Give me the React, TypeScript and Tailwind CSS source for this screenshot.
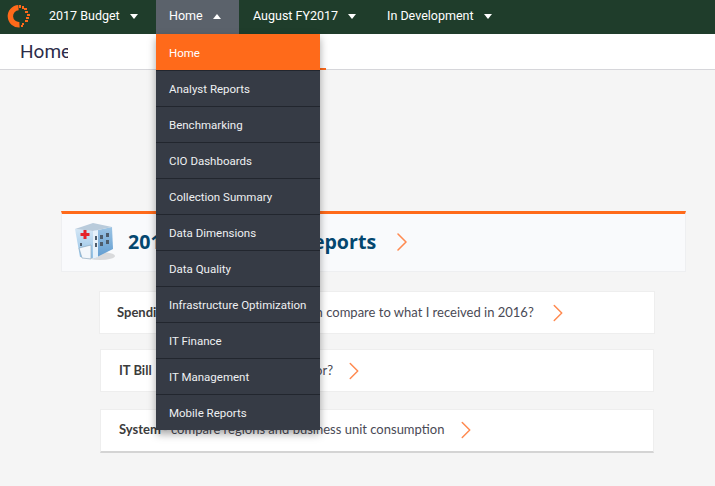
import { ChevronRight } from "lucide-react";

const menuItems = [
  "Home",
  "Analyst Reports",
  "Benchmarking",
  "CIO Dashboards",
  "Collection Summary",
  "Data Dimensions",
  "Data Quality",
  "Infrastructure Optimization",
  "IT Finance",
  "IT Management",
  "Mobile Reports",
];

function Logo() {
  return (
    <svg width="26" height="26" viewBox="0 0 26 26" className="shrink-0">
      <path d="M12.5 3.6A8.6 8.6 0 1 0 13.5 20.8" fill="none" stroke="#ff6a1a" strokeWidth="5.4" />
      <g fill="#ff6a1a">
        <rect x="13" y="1" width="2" height="3" />
        <rect x="16" y="2" width="2" height="3" />
        <rect x="18" y="4" width="3" height="2" />
        <rect x="19" y="7" width="3" height="2" />
        <rect x="21" y="10" width="3" height="2" />
        <rect x="20" y="13" width="3" height="2" />
        <rect x="19" y="16" width="3" height="2" />
        <rect x="16" y="19" width="2" height="2" />
        <rect x="15" y="21" width="2" height="2" />
      </g>
    </svg>
  );
}

function Hospital() {
  return (
    <svg width="42" height="42" viewBox="0 0 42 42" className="shrink-0">
      <defs>
        <linearGradient id="leftFace" x1="0" y1="0" x2="0" y2="1">
          <stop offset="0" stopColor="#d3e6f5" />
          <stop offset="1" stopColor="#8fc0e6" />
        </linearGradient>
        <linearGradient id="rightFace" x1="0" y1="0" x2="0" y2="1">
          <stop offset="0" stopColor="#9cc4e4" />
          <stop offset="1" stopColor="#5f9bd0" />
        </linearGradient>
      </defs>
      <ellipse cx="26" cy="35" rx="15" ry="4" fill="#d9dadc" />
      <path d="M1 8 L19 10 L19 37 L6 36 Z" fill="url(#leftFace)" />
      <path d="M19 10 L38 6 L39 28 L19 38 Z" fill="url(#rightFace)" />
      <path d="M1 8 L19 2 L38 6 L19 10 Z" fill="#b9cbdb" />
      <path d="M19 10 L24 9 L24 36 L19 38 Z" fill="#e6f1fa" />
      <g fill="#4d5c6b">
        <rect x="21" y="15" width="2" height="4" />
        <rect x="21" y="22" width="2" height="4" />
        <rect x="26" y="14" width="3" height="4" />
        <rect x="32" y="12" width="3" height="4" />
        <rect x="26" y="21" width="3" height="4" />
        <rect x="32" y="19" width="3" height="4" />
        <rect x="6" y="22" width="2" height="3" />
      </g>
      <path d="M5 27 L17 24 L17 38 L8 37 Z" fill="#f3f7fb" stroke="#7f9db6" strokeWidth="0.6" />
      <path d="M9.5 9 h3 v3 h3 v3 h-3 v3 h-3 v-3 h-3 v-3 h3 Z" fill="#e5232b" />
    </svg>
  );
}

function Caret({ up }: { up?: boolean }) {
  return (
    <span
      className={
        up
          ? "ml-[10px] mt-[1px] h-0 w-0 border-x-[4.5px] border-b-[5px] border-x-transparent border-b-white"
          : "ml-[10px] mt-[1px] h-0 w-0 border-x-[4.5px] border-t-[5px] border-x-transparent border-t-white"
      }
    />
  );
}

function NavItem({ label, className }: { label: string; className: string }) {
  return (
    <div className={`flex h-full items-center pb-[2px] text-[12.5px] text-white ${className}`}>
      <span>{label}</span>
      <Caret />
    </div>
  );
}

function Row({
  name,
  text,
  className,
  textGap,
  gap,
}: {
  name: string;
  text: string;
  className: string;
  textGap: string;
  gap: string;
}) {
  return (
    <div className={`flex items-center border border-[#eeeeee] bg-white text-[13px] text-[#4a4a55] font-['Lato',sans-serif] ${className}`}>
      <b className="font-bold text-[#3c3c3c]">{name}</b>
      <span className={textGap}>{text}</span>
      <ChevronRight size={30} strokeWidth={1.2} className={`text-[#ff8a50] ${gap}`} />
    </div>
  );
}

export default function App() {
  return (
    <div className="relative h-[486px] w-[715px] overflow-hidden bg-[#f5f5f5] font-['Open_Sans',sans-serif]">
      <nav className="flex h-[34px] items-center bg-[#1f3d2b] font-['Roboto',sans-serif]">
        <div className="ml-[6px] w-[43px]">
          <Logo />
        </div>
        <NavItem label="2017 Budget" className="w-[107px]" />
        <div className="flex h-full w-[83px] items-center bg-[#5b626b] pb-[2px] pl-[13px] text-[12.5px] text-white">
          <span>Home</span>
          <Caret up />
        </div>
        <NavItem label="August FY2017" className="ml-[14px] w-[134px]" />
        <NavItem label="In Development" className="" />
      </nav>

      <div className="flex h-[36px] items-center border-b border-[#d6d6da] bg-white pl-[20px] pt-[1px] font-['Roboto',sans-serif]">
        <span className="w-[48px] overflow-hidden text-[19px] text-[#2c2c4a]">Home</span>
      </div>

      <div className="absolute left-[156px] top-[34px] z-10 w-[164px] bg-[#363b45] font-['Roboto',sans-serif] shadow-[0_4px_8px_rgba(0,0,0,0.35)]">
        {menuItems.map((item, i) => (
          <div
            key={item}
            className={
              i === 0
                ? "flex h-[36px] items-center bg-[#ff6a1a] pl-[13px] pt-[3px] text-[11.5px] text-white"
                : "flex h-[36px] items-center border-t border-[#22262e] pl-[13px] pt-[2px] text-[11.5px] text-[#eef0f2]"
            }
          >
            {item}
          </div>
        ))}
      </div>
      <div className="absolute left-[320px] top-[68px] h-[2px] w-[6px] bg-[#ff6a1a]" />

      <main className="flex flex-col pt-[141px]">
        <section className="ml-[61px] flex h-[61px] w-[625px] items-center border-x border-b border-t-[3px] border-[#eeeff1] border-t-[#ff6a1a] bg-[#f9fafc] pb-[2px] pl-[12px]">
          <Hospital />
          <h1 className="ml-[12px] text-[19.6px] font-bold text-[#04476f]">2017 Executive IT Reports</h1>
          <ChevronRight size={32} strokeWidth={1.2} className="ml-[10px] text-[#ff8a50]" />
        </section>

        <Row
          name="Spending"
          text="- How does my allocation compare to what I received in 2016?"
          className="ml-[99px] mt-[19px] h-[43px] w-[556px] pl-[17px]"
          textGap="ml-[8px]"
          gap="ml-[9px]"
        />
        <Row
          name="IT Bill"
          text="- What am I being billed for?"
          className="ml-[100px] mt-[15px] h-[43px] w-[554px] pl-[18px]"
          textGap="ml-[20px]"
          gap="ml-[6px]"
        />
        <Row
          name="System"
          text="- compare regions and business unit consumption"
          className="ml-[100px] mt-[17px] h-[44px] w-[554px] border-b-2 border-b-[#d4d4d4] pb-[1px] pl-[18px]"
          textGap="ml-[2px]"
          gap="ml-[7px]"
        />
      </main>
    </div>
  );
}
